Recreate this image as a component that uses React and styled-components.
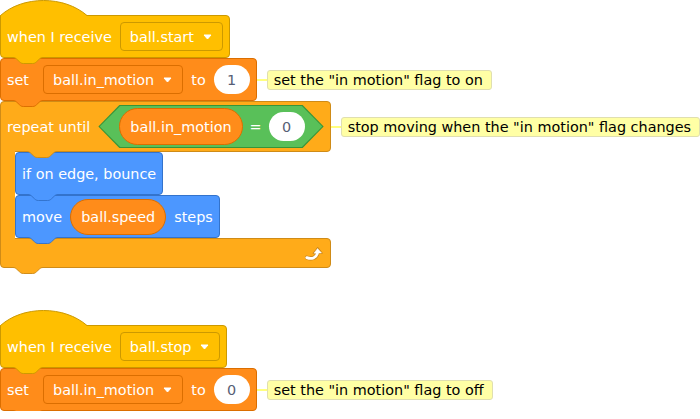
import React from "react";
import styled, { createGlobalStyle } from "styled-components";

// scratch 3 category colours
const events = { fill: "#FFBF00", line: "#CC9900" };
const data = { fill: "#FF8C1A", line: "#DB6E00" };
const control = { fill: "#FFAB19", line: "#CF8B17" };
const motion = { fill: "#4C97FF", line: "#3373CC" };
const operators = { fill: "#59C059", line: "#389438" };

const GlobalStyle = createGlobalStyle`
  body {
    margin: 0;
    background: #fff;
    font-family: "DejaVu Sans", "Liberation Sans", sans-serif;
    font-size: 14.4px;
  }
`;

// tab that hangs under a stack block
const Notch = ({ c, left = 12 }) => (
  <TabSvg $left={left} width="30" height="8" viewBox="0 -1 32 8" preserveAspectRatio="none">
    <path
      d="M0 0.5 C2 0.5 3 1.3 4 2.2 L7 4.8 C8 5.7 9 6.5 11 6.5 H21 C23 6.5 24 5.7 25 4.8 L28 2.2 C29 1.3 30 0.5 32 0.5 V-1 H0 Z"
      fill={c.fill}
    />
    <path
      d="M0 0.5 C2 0.5 3 1.3 4 2.2 L7 4.8 C8 5.7 9 6.5 11 6.5 H21 C23 6.5 24 5.7 25 4.8 L28 2.2 C29 1.3 30 0.5 32 0.5"
      fill="none"
      stroke={c.line}
    />
  </TabSvg>
);

const HatTop = ({ c }) => (
  <HatCap width="88" height="17" viewBox="0 0 88 17">
    <path d="M0.5 17 V15.5 C23 -4.5 64 -4.5 87 15.5 V17 Z" fill={c.fill} />
    <path d="M0.5 17 V15.5 C23 -4.5 64 -4.5 87 15.5" fill="none" stroke={c.line} />
  </HatCap>
);

const Caret = () => (
  <svg width="9" height="6" viewBox="0 0 9 6">
    <path d="M1 1 H8 L4.5 5 Z" fill="#fff" stroke="#fff" strokeLinejoin="round" />
  </svg>
);

const LoopArrow = () => (
  <svg width="19" height="15" viewBox="0 0 19 15">
    <path d="M1.8 11.6 C6.5 13.6 11.4 12 12.4 7" fill="none" stroke="#C9851A" strokeWidth="4.2" strokeLinecap="round" />
    <path d="M8.4 7.4 L12.6 1.8 L17 7.1 Z" fill="#C9851A" stroke="#C9851A" strokeWidth="1.4" strokeLinejoin="round" />
    <path d="M1.8 11.6 C6.5 13.6 11.4 12 12.4 7" fill="none" stroke="#fff" strokeWidth="2.8" strokeLinecap="round" />
    <path d="M8.9 7.2 L12.6 2.4 L16.5 6.9 Z" fill="#fff" stroke="#fff" strokeWidth="0.4" strokeLinejoin="round" />
  </svg>
);

const Comment = ({ children }) => (
  <CommentWrap>
    <Connector />
    <CommentBox>{children}</CommentBox>
  </CommentWrap>
);

const App = () => {
  return (
    <>
      <GlobalStyle />
      <Canvas>
        <Script>
          <Hat $c={events}>
            <HatTop c={events} />
            <span>when I receive</span>
            <Dropdown $c={events}>
              <span>ball.start</span>
              <Caret />
            </Dropdown>
            <Notch c={events} />
          </Hat>
          <Line>
            <Block $c={data}>
              <span>set</span>
              <Dropdown $c={data} $ml={6}>
                <span>ball.in_motion</span>
                <Caret />
              </Dropdown>
              <span>to</span>
              <NumberInput>1</NumberInput>
              <Notch c={data} />
            </Block>
            <Comment>set the "in motion" flag to on</Comment>
          </Line>
          <CBlock>
            <TopArm $c={control}>
              <span>repeat until</span>
              <Hexagon>
                <Reporter $h={37}>ball.in_motion</Reporter>
                <span>=</span>
                <NumberInput>0</NumberInput>
              </Hexagon>
              <Notch c={control} left={26} />
            </TopArm>
            <Comment>stop moving when the "in motion" flag changes</Comment>
            <Mouth>
              <LeftArm />
              <InnerStack>
                <Block $c={motion}>
                  <span>if on edge, bounce</span>
                  <Notch c={motion} />
                </Block>
                <Block $c={motion}>
                  <span>move</span>
                  <Reporter $h={36}>ball.speed</Reporter>
                  <span>steps</span>
                  <Notch c={motion} />
                </Block>
              </InnerStack>
            </Mouth>
            <BottomArm $c={control}>
              <LoopArrow />
              <Notch c={control} />
            </BottomArm>
          </CBlock>
        </Script>

        <Script>
          <Hat $c={events}>
            <HatTop c={events} />
            <span>when I receive</span>
            <Dropdown $c={events}>
              <span>ball.stop</span>
              <Caret />
            </Dropdown>
            <Notch c={events} />
          </Hat>
          <Line>
            <Block $c={data}>
              <span>set</span>
              <Dropdown $c={data} $ml={6}>
                <span>ball.in_motion</span>
                <Caret />
              </Dropdown>
              <span>to</span>
              <NumberInput>0</NumberInput>
              <Notch c={data} />
            </Block>
            <Comment>set the "in motion" flag to off</Comment>
          </Line>
        </Script>
      </Canvas>
    </>
  );
};

const Canvas = styled.div`
  display: flex;
  flex-direction: column;
  align-items: flex-start;
  gap: 42px;
`;

const Script = styled.div`
  display: flex;
  flex-direction: column;
  align-items: flex-start;
`;

const Line = styled.div`
  display: flex;
  align-items: center;
`;

const Block = styled.div`
  position: relative;
  display: flex;
  align-items: center;
  gap: 8px;
  box-sizing: border-box;
  height: 43px;
  padding: 0 6px;
  background: ${(p) => p.$c.fill};
  border: 1px solid ${(p) => p.$c.line};
  border-radius: 4px;
  color: #fff;
  white-space: nowrap;
`;

const Hat = styled(Block)`
  margin-top: 15px;
  border-top-left-radius: 0;
`;

const HatCap = styled.svg`
  position: absolute;
  left: -1px;
  top: -16px;
`;

const TabSvg = styled.svg`
  position: absolute;
  left: ${(p) => p.$left}px;
  bottom: -7px;
  z-index: 2;
  overflow: visible;
`;

const Dropdown = styled.div`
  display: flex;
  align-items: center;
  gap: 9px;
  box-sizing: border-box;
  height: 29px;
  padding: 0 10px 0 9px;
  margin-left: ${(p) => p.$ml || 0}px;
  background: ${(p) => p.$c.fill};
  border: 1px solid ${(p) => p.$c.line};
  border-radius: 4px;
`;

const NumberInput = styled.div`
  display: flex;
  align-items: center;
  justify-content: center;
  box-sizing: border-box;
  height: 29px;
  min-width: 36px;
  padding: 0 10px;
  border-radius: 15px;
  background: #fff;
  color: #575e75;
`;

const Reporter = styled.div`
  display: flex;
  align-items: center;
  box-sizing: border-box;
  height: ${(p) => p.$h}px;
  padding: 0 10px;
  border-radius: 20px;
  background: ${data.fill};
  border: 1px solid ${data.line};
  color: #fff;
`;

const Hexagon = styled.div`
  position: relative;
  isolation: isolate;
  display: flex;
  align-items: center;
  gap: 7px;
  box-sizing: border-box;
  height: 43px;
  padding: 0 19px 0 21px;
  background: ${operators.line};
  clip-path: polygon(21px 0, calc(100% - 21px) 0, 100% 50%, calc(100% - 21px) 100%, 21px 100%, 0 50%);
  &::before {
    content: "";
    position: absolute;
    inset: 1px 1.4px;
    z-index: -1;
    background: ${operators.fill};
    clip-path: polygon(20.4px 0, calc(100% - 20.4px) 0, 100% 50%, calc(100% - 20.4px) 100%, 20.4px 100%, 0 50%);
  }
`;

const CBlock = styled.div`
  display: grid;
  grid-template-columns: auto auto;
  align-items: center;
  justify-items: start;
`;

const TopArm = styled(Block)`
  grid-column: 1;
  grid-row: 1;
  justify-self: stretch;
  height: 51px;
  border-radius: 4px 4px 4px 0;
`;

const Mouth = styled.div`
  grid-column: 1;
  grid-row: 2;
  justify-self: stretch;
  align-self: stretch;
  display: flex;
`;

const LeftArm = styled.div`
  position: relative;
  z-index: 1;
  box-sizing: border-box;
  width: 15px;
  margin: -1px 0;
  background: ${control.fill};
  border-left: 1px solid ${control.line};
`;

const InnerStack = styled.div`
  display: flex;
  flex-direction: column;
  align-items: flex-start;
`;

const BottomArm = styled(Block)`
  grid-column: 1;
  grid-row: 3;
  justify-self: stretch;
  justify-content: flex-end;
  height: 30px;
  border-radius: 0 4px 4px 4px;
`;

const CommentWrap = styled.div`
  grid-column: 2;
  grid-row: 1;
  display: flex;
  align-items: center;
`;

const Connector = styled.div`
  width: 10px;
  height: 2px;
  background: #ffff80;
`;

const CommentBox = styled.div`
  display: flex;
  align-items: center;
  box-sizing: border-box;
  height: 20px;
  padding: 0 8px 0 6px;
  background: #ffffa5;
  border: 1px solid #e0dfb0;
  border-radius: 3px;
  color: #000;
  white-space: nowrap;
`;

export default App;
